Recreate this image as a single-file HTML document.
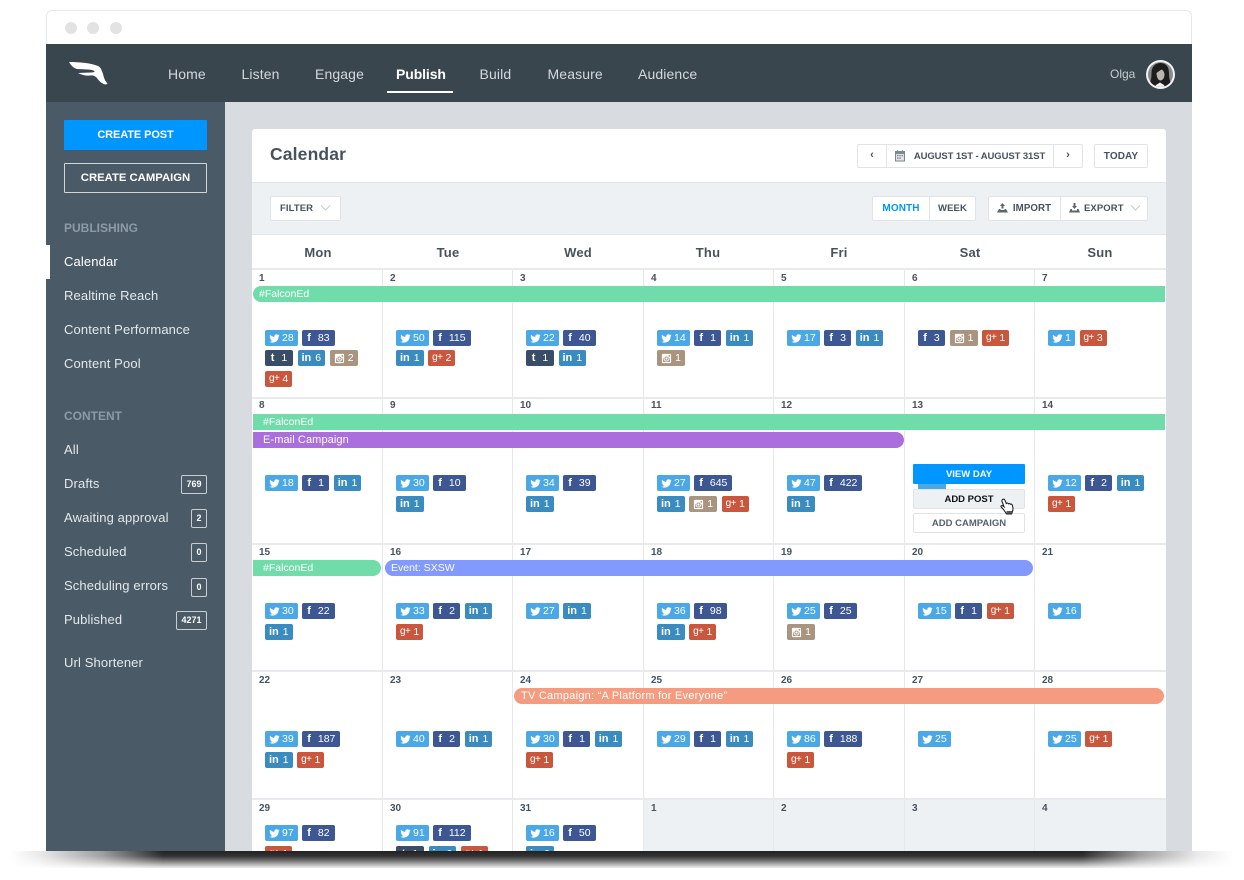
<!DOCTYPE html>
<html><head><meta charset="utf-8"><title>Calendar</title>
<style>
*{box-sizing:border-box}
html,body{margin:0;padding:0;width:1244px;height:880px;overflow:hidden;background:#fff;font-family:"Liberation Sans",sans-serif}
.a{position:absolute}
#win{position:absolute;left:46px;top:10px;width:1146px;height:841px;overflow:hidden;border-radius:6px 6px 0 0}
#stage{position:absolute;left:0;top:0;width:1244px;height:851px;overflow:hidden;filter:blur(.3px)}
.dot{position:absolute;top:22px;width:12px;height:12px;border-radius:50%;background:#e3e3e3}
.nav{position:absolute;top:66px;font-size:14px;line-height:16px;color:#d3d8dc;letter-spacing:.12px;white-space:nowrap}
.sb{position:absolute;left:64px;font-size:13px;line-height:16px;color:#e4e8eb;letter-spacing:.13px;white-space:nowrap}
.sh{position:absolute;left:64px;font-size:12px;line-height:14px;font-weight:bold;color:#8c9ba6;white-space:nowrap}
.cnt{position:absolute;height:19px;border:1px solid #c8ced3;border-radius:2px;color:#fff;font-size:9px;font-weight:bold;line-height:17px;text-align:center}
.btn{position:absolute;background:#fff;border:1px solid #e0e4e8;font-size:10px;font-weight:bold;color:#46535e;text-align:center;line-height:24px;white-space:nowrap;letter-spacing:.1px}
.dh{position:absolute;top:245px;width:130px;text-align:center;font-size:13px;line-height:15px;font-weight:bold;color:#46535e;letter-spacing:.2px}
.vl{position:absolute;top:269px;width:1px;height:582px;background:#e6e8eb}
.hl{position:absolute;left:252px;width:914px;height:2px;background:#e8eaed}
.n{position:absolute;font-size:10px;line-height:12px;font-weight:bold;color:#46535e}
.bar{position:absolute;height:16px;color:#fff;font-size:10.5px;line-height:17px;padding-left:6px;white-space:nowrap}
.r{position:absolute;display:flex;gap:4.5px;height:16px}
.r b{display:flex;align-items:center;justify-content:center;gap:3px;height:16px;border-radius:2px;color:#fff;font-size:10.5px;font-weight:normal;padding:0 4px;min-width:27px;line-height:16px}
.r svg{width:11px;height:11px;fill:#fff;flex:none}
.r i{font-style:normal;font-weight:bold;font-size:11px;line-height:16px}
.t{background:#4aa8e6}
.r b.t{gap:2px}
.f{background:#3d5793}
.r b.f{gap:7px;padding:0 5px}
.l{background:#3a8cc0}
.r b.l{gap:4px}
.g{background:#c9573d}
.r b.g i{font-weight:normal;font-size:10px;letter-spacing:-.5px}
.u{background:#3a4d66;}
.r b.u{gap:7px;min-width:28px}
.s{background:#a99480}
.r b.s{min-width:28px}
#shadow{position:absolute;left:10px;top:851px;width:1224px;height:17px;background:linear-gradient(#222 0,#333 30%,#6e6e6e 55%,#c4c4c4 85%,#eee 100%);-webkit-mask-image:linear-gradient(90deg,transparent 0,rgba(0,0,0,.1) 2.500%,rgba(0,0,0,.45) 7.500%,#000 12.500%,#000 87.600%,rgba(0,0,0,.45) 92.300%,rgba(0,0,0,.1) 97%,transparent 100%);mask-image:linear-gradient(90deg,transparent 0,rgba(0,0,0,.1) 2.500%,rgba(0,0,0,.45) 7.500%,#000 12.500%,#000 87.600%,rgba(0,0,0,.45) 92.300%,rgba(0,0,0,.1) 97%,transparent 100%)}
</style></head><body>
<svg width="0" height="0" style="position:absolute"><defs>
<symbol id="tw" viewBox="0 0 24 24"><path d="M23 5c-.8.4-1.700.6-2.600.7.900-.6 1.600-1.400 2-2.500-.9.500-1.900.9-2.900 1.100A4.600 4.600 0 0 0 11.700 8.500C7.900 8.300 4.500 6.500 2.300 3.700c-1.200 2.100-.6 4.800 1.400 6.100-.7 0-1.400-.2-2-.6 0 2.200 1.500 4.100 3.700 4.600-.7.200-1.400.2-2.100.1.600 1.800 2.300 3.100 4.300 3.200A9.300 9.300 0 0 1 1 19c2 1.300 4.500 2 7 2 8.500 0 13.300-7.200 13-13.600.9-.6 1.600-1.400 2-2.400z"/></symbol>
<symbol id="ig" viewBox="0 0 24 24"><path fill-rule="evenodd" d="M4 2h16a2 2 0 0 1 2 2v16a2 2 0 0 1-2 2H4a2 2 0 0 1-2-2V4a2 2 0 0 1 2-2zm12.500 2.500v3.500h3.500V4.500zM12 7.500a4.500 4.500 0 1 0 0 9 4.500 4.500 0 0 0 0-9zM12 9.500a2.500 2.500 0 1 1 0 5 2.500 2.500 0 0 1 0-5zM4.500 10.500V19.500h15V10.500h-1.200a6.500 6.500 0 1 1-12.600 0z"/></symbol>
<symbol id="cal" viewBox="0 0 12 12"><path d="M1 1h10v10.500H1z" fill="#7d8891"/><path d="M2 4h8v6.500H2z" fill="#dfe3e6"/><path d="M3 .2h1.200V2H3zM7.800.2H9V2H7.800zM3 5h1.500v1.300H3zM5.300 5h1.500v1.300H5.300zM7.600 5h1.500v1.300H7.600zM3 7.500h1.500v1.300H3zM5.300 7.500h1.500v1.300H5.300z" fill="#7d8891"/></symbol>
</defs></svg>

<div id="shadow"></div>
<div id="win" style="background:#fff;border:1.500px solid #e8e8e8;border-bottom:0"></div>
<div id="stage">
<div class="dot" style="left:65px"></div><div class="dot" style="left:87px"></div><div class="dot" style="left:110px"></div>

<!-- top nav -->
<div class="a" style="left:46px;top:44px;width:1146px;height:58px;background:#3a464e"></div>
<svg class="a" style="left:69px;top:61px" width="39" height="24" viewBox="0 0 39 24"><path fill="#fff" d="M0 1C10 1 22 2 29 5C32 6.500 33 10 34 13C35 17 36 20 38.500 22.500L37 23.500C33 23 30 20 28 17C26 15 24 14 21 14.500C17 15 13 14 9 12L22 11.500C24 11.500 26 11 25.500 10C22 8 16 8.500 8 8C4 7 2 4 0 1Z"/></svg>
<div class="nav" style="left:168px">Home</div>
<div class="nav" style="left:241.500px">Listen</div>
<div class="nav" style="left:315px">Engage</div>
<div class="nav" style="left:396px;color:#fff;font-weight:bold;letter-spacing:-.1px">Publish</div>
<div class="a" style="left:387px;top:91px;width:66px;height:2px;background:#fff"></div>
<div class="nav" style="left:479.500px">Build</div>
<div class="nav" style="left:547.500px">Measure</div>
<div class="nav" style="left:638px">Audience</div>
<div class="nav" style="left:1110px;font-size:12px;color:#c5ccd1;letter-spacing:0">Olga</div>
<svg class="a" style="left:1146px;top:60px" width="29" height="29" viewBox="0 0 29 29"><defs><clipPath id="av"><circle cx="14.500" cy="14.500" r="12.500"/></clipPath></defs><circle cx="14.500" cy="14.500" r="14.500" fill="#f4f4f4"/><g clip-path="url(#av)"><rect width="29" height="29" fill="#8a8a8a"/><path fill="#1d1d1d" d="M14.500 3c6 0 8.500 4.500 8.500 10 0 5 1 8 2 11l-5 3H9l-6-3c2-3 2.500-6 2.500-11 0-5.500 3-10 9-10z"/><path fill="#b9b5b2" d="M10.500 13c2-1.500 4-3 5.500-3.500 1.500 1.500 2.500 3 2.500 5 0 3.500-2 6-4 6s-4-3-4-7.500z"/><path fill="#f0f0f0" d="M10 25l4-2.500 4 2.500 2 4H8z"/></g></svg>

<!-- sidebar -->
<div class="a" style="left:46px;top:102px;width:179px;height:749px;background:#4a5a66"></div>
<div class="a" style="left:64px;top:120px;width:143px;height:30px;background:#0096ff;color:#fff;font-size:11px;font-weight:bold;line-height:30px;text-align:center;border-radius:1px;letter-spacing:-.1px">CREATE POST</div>
<div class="a" style="left:64px;top:163px;width:143px;height:30px;border:1px solid #cfd5d9;color:#fff;font-size:11.300px;font-weight:bold;line-height:28px;text-align:center;border-radius:1px">CREATE CAMPAIGN</div>
<div class="sh" style="top:221px">PUBLISHING</div>
<div class="a" style="left:46px;top:245px;width:4px;height:34px;background:#fff"></div>
<div class="sb" style="top:254px;color:#fff">Calendar</div>
<div class="sb" style="top:288px">Realtime Reach</div>
<div class="sb" style="top:322px">Content Performance</div>
<div class="sb" style="top:356px">Content Pool</div>
<div class="sh" style="top:409px">CONTENT</div>
<div class="sb" style="top:442px">All</div>
<div class="sb" style="top:476px">Drafts</div><div class="cnt" style="left:181px;top:475px;width:26px">769</div>
<div class="sb" style="top:510px">Awaiting approval</div><div class="cnt" style="left:191px;top:509px;width:16px">2</div>
<div class="sb" style="top:544px">Scheduled</div><div class="cnt" style="left:191px;top:543px;width:16px">0</div>
<div class="sb" style="top:578px">Scheduling errors</div><div class="cnt" style="left:191px;top:578px;width:16px">0</div>
<div class="sb" style="top:612px">Published</div><div class="cnt" style="left:176px;top:611px;width:31px">4271</div>
<div class="sb" style="top:655px">Url Shortener</div>

<!-- main -->
<div class="a" style="left:225px;top:102px;width:967px;height:749px;background:#d8dce0"></div>
<div class="a" style="left:252px;top:129px;width:914px;height:722px;background:#fff;border-radius:3px 3px 0 0"></div>
<div class="a" style="left:270px;top:144px;font-size:17.500px;line-height:21px;font-weight:bold;color:#46535e;letter-spacing:.15px">Calendar</div>
<div class="a" style="left:252px;top:182px;width:914px;height:53px;background:#eef1f4;border-top:1px solid #e2e5e8;border-bottom:1px solid #e2e5e8"></div>

<div class="btn" style="left:857px;top:144px;width:30px;height:24px;border-radius:2px 0 0 2px;font-size:11px;line-height:21px">&#8249;</div>
<div class="btn" style="left:886px;top:144px;width:168px;height:24px;padding-left:19px;font-size:9.500px;letter-spacing:-.1px">AUGUST 1ST - AUGUST 31ST</div>
<svg class="a" style="left:894px;top:150px" width="12" height="12"><use href="#cal"/></svg>
<div class="btn" style="left:1053px;top:144px;width:30px;height:24px;border-radius:0 2px 2px 0;font-size:11px;line-height:21px">&#8250;</div>
<div class="btn" style="left:1094px;top:144px;width:54px;height:24px;border-radius:2px">TODAY</div>

<div class="btn" style="left:270px;top:196px;width:71px;height:25px;border-radius:2px;text-align:left;padding-left:9px;font-size:9.500px">FILTER</div>
<svg class="a" style="left:320px;top:205px" width="11" height="6" fill="none" stroke="#c6ccd1"><path d="M1 .5l4.500 4.500L10 .5"/></svg>
<div class="btn" style="left:872px;top:196px;width:58px;height:25px;color:#0096ff;border-radius:2px 0 0 2px">MONTH</div>
<div class="btn" style="left:929px;top:196px;width:47px;height:25px;border-radius:0 2px 2px 0;font-size:9.500px">WEEK</div>
<div class="btn" style="left:988px;top:196px;width:73px;height:25px;border-radius:2px 0 0 2px;padding-left:15px;font-size:9.700px">IMPORT</div>
<div class="btn" style="left:1060px;top:196px;width:88px;height:25px;border-radius:0 2px 2px 0;text-align:left;padding-left:23px;font-size:9.500px">EXPORT</div>
<svg class="a" style="left:997px;top:203px" width="11" height="10" fill="#5a6670"><path d="M5.500 0L8 3H6.500v2.500h-2V3H3zM0 9.500L2 6h1.500v1h4V6H9l2 3.500z"/></svg>
<svg class="a" style="left:1069px;top:203px" width="11" height="10" fill="#5a6670"><path d="M4.500 0h2v3H8L5.500 6 3 3h1.500zM0 9.500L1.500 6H3v1.500h5V6h1.500L11 9.500z"/></svg>
<svg class="a" style="left:1130px;top:205px" width="11" height="6" fill="none" stroke="#c6ccd1"><path d="M1 .5l4.500 4.500L10 .5"/></svg>

<div class="dh" style="left:253px">Mon</div><div class="dh" style="left:383px">Tue</div><div class="dh" style="left:513px">Wed</div><div class="dh" style="left:643px">Thu</div><div class="dh" style="left:774px">Fri</div><div class="dh" style="left:905px">Sat</div><div class="dh" style="left:1035px">Sun</div>

<!-- last row bg -->
<div class="a" style="left:643px;top:799px;width:523px;height:52px;background:#eef1f4"></div>
<div class="vl" style="left:382px"></div><div class="vl" style="left:512px"></div><div class="vl" style="left:643px"></div><div class="vl" style="left:773px"></div><div class="vl" style="left:904px"></div><div class="vl" style="left:1034px"></div>
<div class="hl" style="top:268px"></div><div class="hl" style="top:397px"></div><div class="hl" style="top:543px"></div><div class="hl" style="top:670px"></div><div class="hl" style="top:798px"></div>

<!-- day numbers -->
<div class="n" style="left:259px;top:273px">1</div><div class="n" style="left:390px;top:273px">2</div><div class="n" style="left:520px;top:273px">3</div><div class="n" style="left:651px;top:273px">4</div><div class="n" style="left:781px;top:273px">5</div><div class="n" style="left:912px;top:273px">6</div><div class="n" style="left:1042px;top:273px">7</div>
<div class="n" style="left:259px;top:400px">8</div><div class="n" style="left:390px;top:400px">9</div><div class="n" style="left:520px;top:400px">10</div><div class="n" style="left:651px;top:400px">11</div><div class="n" style="left:781px;top:400px">12</div><div class="n" style="left:912px;top:400px">13</div><div class="n" style="left:1042px;top:400px">14</div>
<div class="n" style="left:259px;top:547px">15</div><div class="n" style="left:390px;top:547px">16</div><div class="n" style="left:520px;top:547px">17</div><div class="n" style="left:651px;top:547px">18</div><div class="n" style="left:781px;top:547px">19</div><div class="n" style="left:912px;top:547px">20</div><div class="n" style="left:1042px;top:547px">21</div>
<div class="n" style="left:259px;top:675px">22</div><div class="n" style="left:390px;top:675px">23</div><div class="n" style="left:520px;top:675px">24</div><div class="n" style="left:651px;top:675px">25</div><div class="n" style="left:781px;top:675px">26</div><div class="n" style="left:912px;top:675px">27</div><div class="n" style="left:1042px;top:675px">28</div>
<div class="n" style="left:259px;top:803px">29</div><div class="n" style="left:390px;top:803px">30</div><div class="n" style="left:520px;top:803px">31</div><div class="n" style="left:651px;top:803px">1</div><div class="n" style="left:781px;top:803px">2</div><div class="n" style="left:912px;top:803px">3</div><div class="n" style="left:1042px;top:803px">4</div>

<!-- event bars -->
<div class="bar" style="left:253px;top:286px;width:912px;background:#70dcaa;border-radius:8px 0 0 8px">#FalconEd</div>
<div class="bar" style="left:253px;top:414px;width:912px;background:#70dcaa;padding-left:10px">#FalconEd</div>
<div class="bar" style="left:253px;top:432px;width:651px;background:#aa6fdc;border-radius:0 8px 8px 0;padding-left:10px;font-size:11px;letter-spacing:.1px">E-mail Campaign</div>
<div class="bar" style="left:253px;top:560px;width:128px;background:#70dcaa;border-radius:0 8px 8px 0;padding-left:10px">#FalconEd</div>
<div class="bar" style="left:385px;top:560px;width:648px;background:#8299ff;border-radius:8px">Event: SXSW</div>
<div class="bar" style="left:514px;top:688px;width:650px;background:#f59b80;border-radius:8px;padding-left:7px;font-size:11px;letter-spacing:.25px">TV Campaign: &#8220;A Platform for Everyone&#8221;</div>

<!-- week 1 -->
<div class="r" style="left:265px;top:330px"><b class="t"><svg><use href="#tw"/></svg>28</b><b class="f"><i>f</i>83</b></div>
<div class="r" style="left:265px;top:350px"><b class="u"><i>t</i>1</b><b class="l"><i>in</i>6</b><b class="s"><svg><use href="#ig"/></svg>2</b></div>
<div class="r" style="left:265px;top:371px"><b class="g"><i>g+</i>4</b></div>
<div class="r" style="left:396px;top:330px"><b class="t"><svg><use href="#tw"/></svg>50</b><b class="f"><i>f</i>115</b></div>
<div class="r" style="left:396px;top:350px"><b class="l"><i>in</i>1</b><b class="g"><i>g+</i>2</b></div>
<div class="r" style="left:526px;top:330px"><b class="t"><svg><use href="#tw"/></svg>22</b><b class="f"><i>f</i>40</b></div>
<div class="r" style="left:526px;top:350px"><b class="u"><i>t</i>1</b><b class="l"><i>in</i>1</b></div>
<div class="r" style="left:657px;top:330px"><b class="t"><svg><use href="#tw"/></svg>14</b><b class="f"><i>f</i>1</b><b class="l"><i>in</i>1</b></div>
<div class="r" style="left:657px;top:350px"><b class="s"><svg><use href="#ig"/></svg>1</b></div>
<div class="r" style="left:787px;top:330px"><b class="t"><svg><use href="#tw"/></svg>17</b><b class="f"><i>f</i>3</b><b class="l"><i>in</i>1</b></div>
<div class="r" style="left:918px;top:330px"><b class="f"><i>f</i>3</b><b class="s"><svg><use href="#ig"/></svg>1</b><b class="g"><i>g+</i>1</b></div>
<div class="r" style="left:1048px;top:330px"><b class="t"><svg><use href="#tw"/></svg>1</b><b class="g"><i>g+</i>3</b></div>
<!-- week 2 -->
<div class="r" style="left:265px;top:475px"><b class="t"><svg><use href="#tw"/></svg>18</b><b class="f"><i>f</i>1</b><b class="l"><i>in</i>1</b></div>
<div class="r" style="left:396px;top:475px"><b class="t"><svg><use href="#tw"/></svg>30</b><b class="f"><i>f</i>10</b></div>
<div class="r" style="left:396px;top:496px"><b class="l"><i>in</i>1</b></div>
<div class="r" style="left:526px;top:475px"><b class="t"><svg><use href="#tw"/></svg>34</b><b class="f"><i>f</i>39</b></div>
<div class="r" style="left:526px;top:496px"><b class="l"><i>in</i>1</b></div>
<div class="r" style="left:657px;top:475px"><b class="t"><svg><use href="#tw"/></svg>27</b><b class="f"><i>f</i>645</b></div>
<div class="r" style="left:657px;top:496px"><b class="l"><i>in</i>1</b><b class="s"><svg><use href="#ig"/></svg>1</b><b class="g"><i>g+</i>1</b></div>
<div class="r" style="left:787px;top:475px"><b class="t"><svg><use href="#tw"/></svg>47</b><b class="f"><i>f</i>422</b></div>
<div class="r" style="left:787px;top:496px"><b class="l"><i>in</i>1</b></div>
<div class="a" style="left:918px;top:480px;width:28px;height:9px;background:#4aa8e6"></div>
<div class="r" style="left:1048px;top:475px"><b class="t"><svg><use href="#tw"/></svg>12</b><b class="f"><i>f</i>2</b><b class="l"><i>in</i>1</b></div>
<div class="r" style="left:1048px;top:496px"><b class="g"><i>g+</i>1</b></div>
<!-- week 3 -->
<div class="r" style="left:265px;top:603px"><b class="t"><svg><use href="#tw"/></svg>30</b><b class="f"><i>f</i>22</b></div>
<div class="r" style="left:265px;top:624px"><b class="l"><i>in</i>1</b></div>
<div class="r" style="left:396px;top:603px"><b class="t"><svg><use href="#tw"/></svg>33</b><b class="f"><i>f</i>2</b><b class="l"><i>in</i>1</b></div>
<div class="r" style="left:396px;top:624px"><b class="g"><i>g+</i>1</b></div>
<div class="r" style="left:526px;top:603px"><b class="t"><svg><use href="#tw"/></svg>27</b><b class="l"><i>in</i>1</b></div>
<div class="r" style="left:657px;top:603px"><b class="t"><svg><use href="#tw"/></svg>36</b><b class="f"><i>f</i>98</b></div>
<div class="r" style="left:657px;top:624px"><b class="l"><i>in</i>1</b><b class="g"><i>g+</i>1</b></div>
<div class="r" style="left:787px;top:603px"><b class="t"><svg><use href="#tw"/></svg>25</b><b class="f"><i>f</i>25</b></div>
<div class="r" style="left:787px;top:624px"><b class="s"><svg><use href="#ig"/></svg>1</b></div>
<div class="r" style="left:918px;top:603px"><b class="t"><svg><use href="#tw"/></svg>15</b><b class="f"><i>f</i>1</b><b class="g"><i>g+</i>1</b></div>
<div class="r" style="left:1048px;top:603px"><b class="t"><svg><use href="#tw"/></svg>16</b></div>
<!-- week 4 -->
<div class="r" style="left:265px;top:731px"><b class="t"><svg><use href="#tw"/></svg>39</b><b class="f"><i>f</i>187</b></div>
<div class="r" style="left:265px;top:752px"><b class="l"><i>in</i>1</b><b class="g"><i>g+</i>1</b></div>
<div class="r" style="left:396px;top:731px"><b class="t"><svg><use href="#tw"/></svg>40</b><b class="f"><i>f</i>2</b><b class="l"><i>in</i>1</b></div>
<div class="r" style="left:526px;top:731px"><b class="t"><svg><use href="#tw"/></svg>30</b><b class="f"><i>f</i>1</b><b class="l"><i>in</i>1</b></div>
<div class="r" style="left:526px;top:752px"><b class="g"><i>g+</i>1</b></div>
<div class="r" style="left:657px;top:731px"><b class="t"><svg><use href="#tw"/></svg>29</b><b class="f"><i>f</i>1</b><b class="l"><i>in</i>1</b></div>
<div class="r" style="left:787px;top:731px"><b class="t"><svg><use href="#tw"/></svg>86</b><b class="f"><i>f</i>188</b></div>
<div class="r" style="left:787px;top:752px"><b class="g"><i>g+</i>1</b></div>
<div class="r" style="left:918px;top:731px"><b class="t"><svg><use href="#tw"/></svg>25</b></div>
<div class="r" style="left:1048px;top:731px"><b class="t"><svg><use href="#tw"/></svg>25</b><b class="g"><i>g+</i>1</b></div>
<!-- week 5 -->
<div class="r" style="left:265px;top:825px"><b class="t"><svg><use href="#tw"/></svg>97</b><b class="f"><i>f</i>82</b></div>
<div class="r" style="left:265px;top:846px"><b class="g"><i>g+</i>1</b></div>
<div class="r" style="left:396px;top:825px"><b class="t"><svg><use href="#tw"/></svg>91</b><b class="f"><i>f</i>112</b></div>
<div class="r" style="left:396px;top:846px"><b class="u"><i>t</i>1</b><b class="l"><i>in</i>6</b><b class="g"><i>g+</i>1</b></div>
<div class="r" style="left:526px;top:825px"><b class="t"><svg><use href="#tw"/></svg>16</b><b class="f"><i>f</i>50</b></div>
<div class="r" style="left:526px;top:846px"><b class="l"><i>in</i>6</b></div>

<!-- hover actions -->
<div class="a" style="left:913px;top:464px;width:112px;height:20px;background:#0096ff;color:#fff;font-size:9.500px;font-weight:bold;text-align:center;line-height:21px;border-radius:1px">VIEW DAY</div>
<div class="a" style="left:913px;top:489px;width:112px;height:20px;background:#eef1f4;border:1px solid #e0e4e8;color:#111;font-size:9.500px;font-weight:bold;text-align:center;line-height:19px;border-radius:2px">ADD POST</div>
<div class="a" style="left:913px;top:513px;width:112px;height:20px;background:#fff;border:1px solid #e0e4e8;color:#55626c;font-size:9.500px;font-weight:bold;text-align:center;line-height:19px;border-radius:2px">ADD CAMPAIGN</div>
<svg class="a" style="left:1000px;top:498px" width="16" height="18" viewBox="0 0 16 18"><path fill="#fff" stroke="#222" stroke-width="1.100" d="M2.500 1.500c1-.8 2-.3 2.400.7l1.400 3.300c.7-.7 1.700-.5 2.100.3.600-.5 1.500-.3 1.900.4.800-.4 1.700 0 2 .8.800 2.500.9 4.500.2 6.500l-.9 2.500H6.500L3.500 11.500 1.200 9c-.6-.8.300-1.800 1.300-1.300l1.500 1L2 3.500c-.2-.7 0-1.500.5-2z"/><path fill="#555" d="M6.500 13h5.500v2.500H6.500z"/></svg>
</div>
</body></html>
